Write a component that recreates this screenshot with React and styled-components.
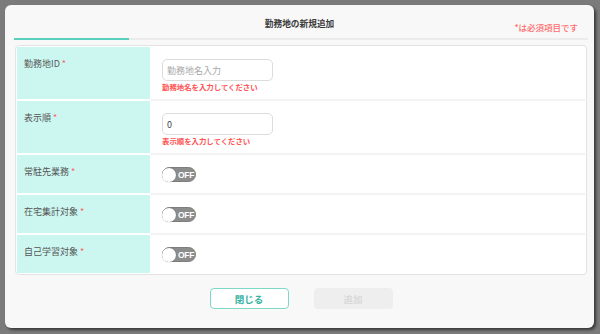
import React from 'react';
import styled, { createGlobalStyle } from 'styled-components';

const GlobalStyle = createGlobalStyle`
  html, body {
    margin: 0;
    padding: 0;
    background: #7b7b7b;
    font-family: "Noto Sans CJK JP", "Noto Sans", sans-serif;
  }
`;

const Overlay = styled.div`
  width: 600px;
  height: 334px;
  box-sizing: border-box;
  padding: 5px 6px 6px 5px;
`;

const Modal = styled.div`
  width: 589px;
  height: 323px;
  box-sizing: border-box;
  background: #f8f8f8;
  border-radius: 6px;
  box-shadow: 2px 2px 3px rgba(0, 0, 0, 0.55);
  display: flex;
  flex-direction: column;
`;

const Header = styled.div`
  height: 33px;
  display: grid;
  grid-template-columns: 1fr auto 1fr;
  padding: 0 16px 0 16px;
`;

const Title = styled.div`
  grid-column: 2;
  align-self: center;
  margin-top: 4px;
  font-size: 8.7px;
  font-weight: bold;
  color: #3a3a3a;
`;

const Note = styled.div`
  grid-column: 3;
  justify-self: end;
  align-self: end;
  margin-bottom: 5px;
  font-size: 8.5px;
  font-weight: 500;
  color: #ff6b6b;
`;

const TabLine = styled.div`
  height: 2px;
  margin: 0 6px 0 9px;
  background: #ebebeb;
  display: flex;
`;

const TabActive = styled.div`
  width: 115px;
  background: #5ccfbc;
`;

const Card = styled.div`
  margin: 5px 7px 0 10px;
  padding: 1px;
  background: #fff;
  border: 1px solid #e3e3e3;
  border-radius: 4px;
  display: flex;
  flex-direction: column;
`;

const Row = styled.div`
  display: grid;
  grid-template-columns: 133px 1fr;
  height: ${p => p.$h}px;
`;

const Label = styled.div`
  background: #ccf7f0;
  padding: 10px 0 0 7px;
  font-size: 9px;
  color: #555;
  border-bottom: ${p => (p.$last ? 'none' : '2px solid #fff')};
`;

const Req = styled.span`
  color: #ff5f5f;
  margin-left: 2px;
`;

const Value = styled.div`
  padding: 12px 0 0 12px;
  border-bottom: ${p => (p.$last ? 'none' : '2px solid #f3f3f3')};
`;

const Input = styled.input`
  display: block;
  width: 111px;
  height: 22px;
  box-sizing: border-box;
  border: 1px solid #dcdcdc;
  border-radius: 5px;
  padding: 0 4px;
  font-family: inherit;
  font-size: 9px;
  color: #444;
  background: #fff;
  outline: none;
  &::placeholder {
    color: #a8a8a8;
  }
`;

const Error = styled.div`
  margin-top: 1px;
  font-size: 7.4px;
  font-weight: bold;
  color: #ff5252;
  line-height: 10px;
`;

const Toggle = styled.div`
  width: 34px;
  height: 15px;
  box-sizing: border-box;
  border-radius: 8px;
  background: #8c8c8c;
  border: 1px solid #7d7d7d;
  display: flex;
  align-items: center;
`;

const Knob = styled.div`
  width: 14px;
  height: 14px;
  border-radius: 50%;
  background: #fff;
  margin-left: -1px;
  box-shadow: 0 0 1px rgba(0, 0, 0, 0.4);
`;

const ToggleText = styled.span`
  margin-left: 2px;
  font-family: "Liberation Sans", Arial, sans-serif;
  font-size: 8.5px;
  font-weight: bold;
  letter-spacing: -0.3px;
  color: #fff;
`;

const Footer = styled.div`
  flex: 1;
  display: flex;
  justify-content: center;
  align-items: flex-start;
  gap: 25px;
  padding: 13px 0 0 3px;
`;

const Button = styled.button`
  width: 79px;
  height: 21px;
  box-sizing: border-box;
  border-radius: 4px;
  font-family: inherit;
  font-size: 9.5px;
  font-weight: bold;
  border: 1px solid ${p => (p.$disabled ? '#eeeeee' : '#7dd8ca')};
  background: ${p => (p.$disabled ? '#eeeeee' : '#fff')};
  color: ${p => (p.$disabled ? '#d9d9d9' : '#36b3a1')};
  padding: 0;
`;

const rows = [
  { label: '勤務地ID', h: 54, kind: 'input', placeholder: '勤務地名入力', error: '勤務地名を入力してください' },
  { label: '表示順', h: 54, kind: 'input', value: '0', error: '表示順を入力してください' },
  { label: '常駐先業務', h: 40, kind: 'toggle' },
  { label: '在宅集計対象', h: 40, kind: 'toggle' },
  { label: '自己学習対象', h: 38, kind: 'toggle' },
];

export default function App() {
  return (
    <>
      <GlobalStyle />
      <Overlay>
        <Modal>
          <Header>
            <Title>勤務地の新規追加</Title>
            <Note>*は必須項目です</Note>
          </Header>
          <TabLine>
            <TabActive />
          </TabLine>
          <Card>
            {rows.map((r, i) => {
              const last = i === rows.length - 1;
              return (
                <Row key={r.label} $h={r.h}>
                  <Label $last={last}>
                    {r.label}
                    <Req>*</Req>
                  </Label>
                  <Value $last={last}>
                    {r.kind === 'input' ? (
                      <>
                        <Input placeholder={r.placeholder} defaultValue={r.value} />
                        <Error>{r.error}</Error>
                      </>
                    ) : (
                      <Toggle>
                        <Knob />
                        <ToggleText>OFF</ToggleText>
                      </Toggle>
                    )}
                  </Value>
                </Row>
              );
            })}
          </Card>
          <Footer>
            <Button>閉じる</Button>
            <Button $disabled>追加</Button>
          </Footer>
        </Modal>
      </Overlay>
    </>
  );
}
